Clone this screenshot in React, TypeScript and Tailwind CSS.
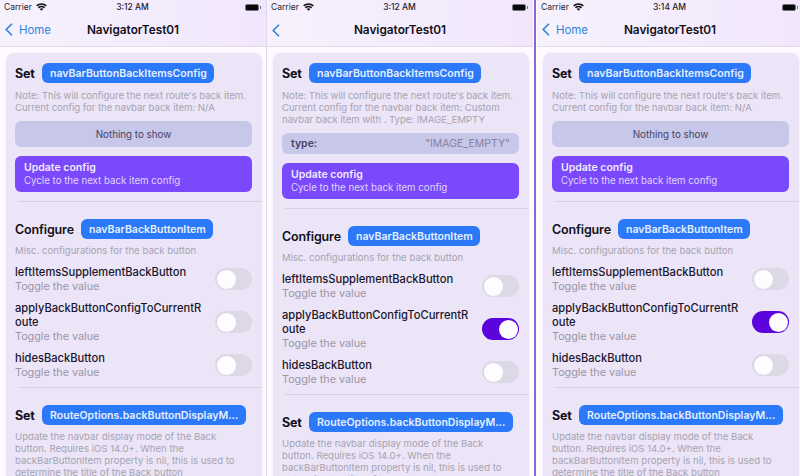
import React from "react";

type PhoneProps = {
  time: string;
  home: boolean;
  custom: boolean;
  applied: boolean;
  className: string;
};

function Pill({ children, className }: { children: string; className: string }) {
  return (
    <span
      className={`flex h-[20px] items-center rounded-[6px] bg-[#2b78f8] pt-px pl-[8px] text-[10.55px] font-semibold whitespace-nowrap text-[#e4f0ff] ${className}`}
    >
      {children}
    </span>
  );
}

function Toggle({ on }: { on: boolean }) {
  return (
    <span
      className={`flex h-[22px] w-[37px] shrink-0 items-center rounded-full p-[1.5px] ${
        on ? "justify-end bg-[#5b05dc]" : "justify-start bg-[#dcd8e5]"
      }`}
    >
      <span className="size-[19px] rounded-full bg-[#fdfcff]" />
    </span>
  );
}

function Row({ title, on, className }: { title: string[]; on: boolean; className: string }) {
  return (
    <div className={`flex items-center justify-between ${className}`}>
      <div className="whitespace-nowrap">
        {title.map((t) => (
          <div key={t} className="text-[11.15px] leading-[14px] font-medium text-[#19152d]">
            {t}
          </div>
        ))}
        <div className="pt-px text-[10.8px] leading-[13px] text-[#9a96a6]">Toggle the value</div>
      </div>
      <Toggle on={on} />
    </div>
  );
}

function Notes({ lines, className }: { lines: string[]; className: string }) {
  return (
    <div className={`text-[9.6px] leading-[12px] whitespace-nowrap text-[#a7a3b2] ${className}`}>
      {lines.map((l) => (
        <div key={l}>{l}</div>
      ))}
    </div>
  );
}

function Phone({ time, home, custom, applied, className }: PhoneProps) {
  return (
    <section className={`flex h-full shrink-0 flex-col overflow-hidden bg-[#fdfbff] ${className}`}>
      <header className="h-[47px] w-[266px] shrink-0 border-b border-[#e2dce8] bg-linear-to-r from-[#f6f2fd] to-[#f2e6fc]">
        <div className="grid h-[14px] grid-cols-3 items-center pr-[5px] pl-[4px] text-[8.5px] leading-[14px] text-[#25212d]">
          <div className="flex items-center gap-[4px]">
            <span>Carrier</span>
            <svg width="11" height="8" viewBox="0 0 11 8" fill="none" stroke="#111018" strokeWidth="1.6">
              <path d="M.7 2.9C3.4.3 7.6.3 10.3 2.9M2.5 4.8c1.7-1.6 4.3-1.6 6 0" />
              <path d="M5.5 7.7 3.8 5.9c1-.8 2.4-.8 3.4 0Z" fill="#111018" stroke="none" />
            </svg>
          </div>
          <span className="text-center font-medium whitespace-nowrap">{time}</span>
          <div className="flex items-center justify-end">
            <span className="h-[7px] w-[14px] rounded-[2px] border border-[#77727f] bg-[#08070a]" />
            <span className="ml-px h-[3px] w-px bg-[#77727f]" />
          </div>
        </div>
        <div className="grid h-[32px] grid-cols-[1fr_auto_1fr] items-center pl-[5px] pr-[5px]">
          <div className="flex items-center gap-[6px] text-[#2f82d8]">
            <svg width="8" height="13" viewBox="0 0 8 13" fill="none" stroke="currentColor" strokeWidth="1.6">
              <path d="M7 .7 1.2 6.5 7 12.3" />
            </svg>
            {home && <span className="pt-px text-[11.4px]">Home</span>}
          </div>
          <h1 className="pt-[2px] text-[11.8px] font-semibold text-[#12101a]">NavigatorTest01</h1>
        </div>
      </header>
      <main className="mt-[6px] ml-[6px] h-[440px] w-[256px] rounded-t-[8px] bg-[#ebe5f7] pt-[10px] pl-[9px] shadow-[0_0_3px_#f1ecfa]">
        <div className="flex items-center">
          <span className="h-[20px] w-[27px] pt-px text-[12.5px] leading-[20px] font-bold tracking-[-0.2px] text-[#12101a]">
            Set
          </span>
          <Pill className="w-[172px]">navBarButtonBackItemsConfig</Pill>
        </div>
        <Notes
          className="mt-[7px] tracking-[-0.04px]"
          lines={
            custom
              ? [
                  "Note: This will configure the next route's back item.",
                  "Current config for the navbar back item: Custom",
                  "navbar back item with . Type: IMAGE_EMPTY",
                ]
              : ["Note: This will configure the next route's back item.", "Current config for the navbar back item: N/A"]
          }
        />
        {custom ? (
          <div className="mt-[7px] flex h-[21px] w-[237px] items-center justify-between rounded-[6px] bg-[#c7c7e9] pr-[9px] pl-[9px] text-[10.5px]">
            <span className="font-semibold text-[#484364]">type:</span>
            <span className="text-[#8582a0]">"IMAGE_EMPTY"</span>
          </div>
        ) : (
          <div className="mt-[7px] flex h-[26px] w-[237px] items-center justify-center rounded-[6px] bg-[#c7c7e9] pt-[2px] text-[9.8px] text-[#484364]">
            Nothing to show
          </div>
        )}
        <div className="mt-[9px] flex h-[36px] w-[237px] flex-col justify-center rounded-[6px] bg-[#7a49fb] pt-px pl-[9px] whitespace-nowrap text-[#f1ebff]">
          <div className="text-[10.5px] leading-[12px] font-semibold">Update config</div>
          <div className="text-[9.7px] leading-[13px] text-[#e0d5ff]">Cycle to the next back item config</div>
        </div>
        <div className="mt-[9px] ml-[3px] h-px bg-[#d6d0df]" />
        <div className="mt-[17px] flex items-center">
          <span className="h-[20px] w-[66px] pt-px text-[12.5px] leading-[20px] font-semibold tracking-[-0.15px] text-[#12101a]">
            Configure
          </span>
          <Pill className="w-[132px]">navBarBackButtonItem</Pill>
        </div>
        <Notes className="mt-[6px]" lines={["Misc. configurations for the back button"]} />
        <div className="mt-[8px] flex w-[237px] flex-col gap-[8px]">
          <Row className="h-[28px]" title={["leftItemsSupplementBackButton"]} on={false} />
          <Row className="h-[42px]" title={["applyBackButtonConfigToCurrentR", "oute"]} on={applied} />
          <Row className="h-[28px]" title={["hidesBackButton"]} on={false} />
        </div>
        <div className="mt-[8px] ml-[3px] h-px bg-[#d6d0df]" />
        <div className="mt-[17px] flex items-center">
          <span className="h-[20px] w-[27px] pt-px text-[12.5px] leading-[20px] font-bold tracking-[-0.2px] text-[#12101a]">
            Set
          </span>
          <Pill className="w-[204px]">RouteOptions.backButtonDisplayM...</Pill>
        </div>
        <Notes
          className="mt-[6px]"
          lines={[
            "Update the navbar display mode of the Back",
            "button. Requires iOS 14.0+. When the",
            "backBarButtonItem property is nil, this is used to",
            "determine the title of the Back button",
          ]}
        />
      </main>
    </section>
  );
}

export default function App() {
  return (
    <div className="flex h-[476px] w-[800px] overflow-hidden bg-[#fdfbff] font-['Inter','Liberation_Sans',sans-serif]">
      <Phone className="w-[267px] border-r border-[#e3d7ef]" time="3:12 AM" home custom={false} applied={false} />
      <Phone className="w-[269px] border-r-2 border-[#8a68cf]" time="3:12 AM" home={false} custom applied />
      <Phone className="w-[264px] pl-px" time="3:14 AM" home custom={false} applied />
    </div>
  );
}
